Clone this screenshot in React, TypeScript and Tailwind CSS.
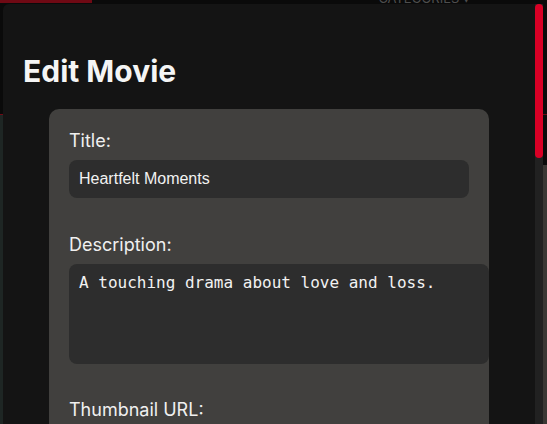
import React from 'react';

const fields = [
  { label: 'Thumbnail URL:', value: 'https://example.com/thumbs/heartfelt.jpg' },
  { label: 'Video URL:', value: 'https://example.com/videos/heartfelt.mp4' },
  { label: 'Genre:', value: 'Drama' },
];

export default function App() {
  return (
    <div className="relative h-[424px] w-[547px] overflow-hidden bg-[#0a0a0a] font-['Inter',sans-serif]">
      {/* page behind the modal */}
      <div className="flex h-[115px] items-start justify-between border-b border-[#6e0a15] bg-[#0a0a0a]">
        <button className="-mt-[20px] h-[23px] w-[92px] bg-[#6f0914] text-[14px] leading-[20px] text-[#a07a80]">
          Light Mode
        </button>
        <span className="-mt-[10px] mr-[77px] text-[13px] leading-[16px] uppercase text-[#4e4e4e]">
          Categories ▾
        </span>
      </div>
      <div className="flex">
        <div className="h-[310px] w-[40px] bg-[#1e2624]" />
        <div className="flex-1" />
        <div className="mt-[50px] h-[260px] w-[40px] bg-[#3a3734]" />
      </div>

      {/* modal */}
      <div className="fixed left-[3px] top-[4px] flex h-[420px] w-[540px] overflow-hidden rounded-tl-[6px] bg-[#141414]">
        <div className="w-[532px] overflow-hidden px-5 pt-[49px]">
          <h2 className="mb-5 text-[30px] font-bold leading-[36px] text-[#f5f5f5]">Edit Movie</h2>

          <div className="mx-auto w-[440px] rounded-[10px] bg-[#41403e] px-5 pb-6 pt-[21px]">
            <label className="mb-2 block text-[18px] leading-[22px] text-[#f0f0f0]">Title:</label>
            <input
              readOnly
              value="Heartfelt Moments"
              className="block h-[38px] w-full rounded-[8px] bg-[#2d2d2d] px-[10px] font-['Liberation_Sans',Arial,sans-serif] text-[16px] text-[#f2f2f2] outline-none"
            />

            <label className="mb-2 mt-[36px] block text-[18px] leading-[22px] text-[#f0f0f0]">Description:</label>
            <textarea
              readOnly
              value="A touching drama about love and loss."
              className="block h-[100px] w-[420px] resize-none rounded-[8px] bg-[#2d2d2d] p-[10px] font-['DejaVu_Sans_Mono',monospace] text-[16px] leading-[1.164] text-[#f2f2f2] outline-none"
            />

            {fields.map((f, i) => (
              <div key={f.label}>
                <label className={`mb-2 block text-[18px] leading-[22px] text-[#f0f0f0] ${i === 0 ? 'mt-[35px]' : 'mt-[36px]'}`}>
                  {f.label}
                </label>
                <input
                  readOnly
                  value={f.value}
                  className="block h-[38px] w-full rounded-[8px] bg-[#2d2d2d] px-[10px] font-['Liberation_Sans',Arial,sans-serif] text-[16px] text-[#f2f2f2] outline-none"
                />
              </div>
            ))}
          </div>
        </div>

        {/* scrollbar */}
        <div className="w-[8px] shrink-0 bg-[#212121]">
          <div className="h-[154px] rounded-full bg-[#d90025]" />
        </div>
      </div>
    </div>
  );
}
